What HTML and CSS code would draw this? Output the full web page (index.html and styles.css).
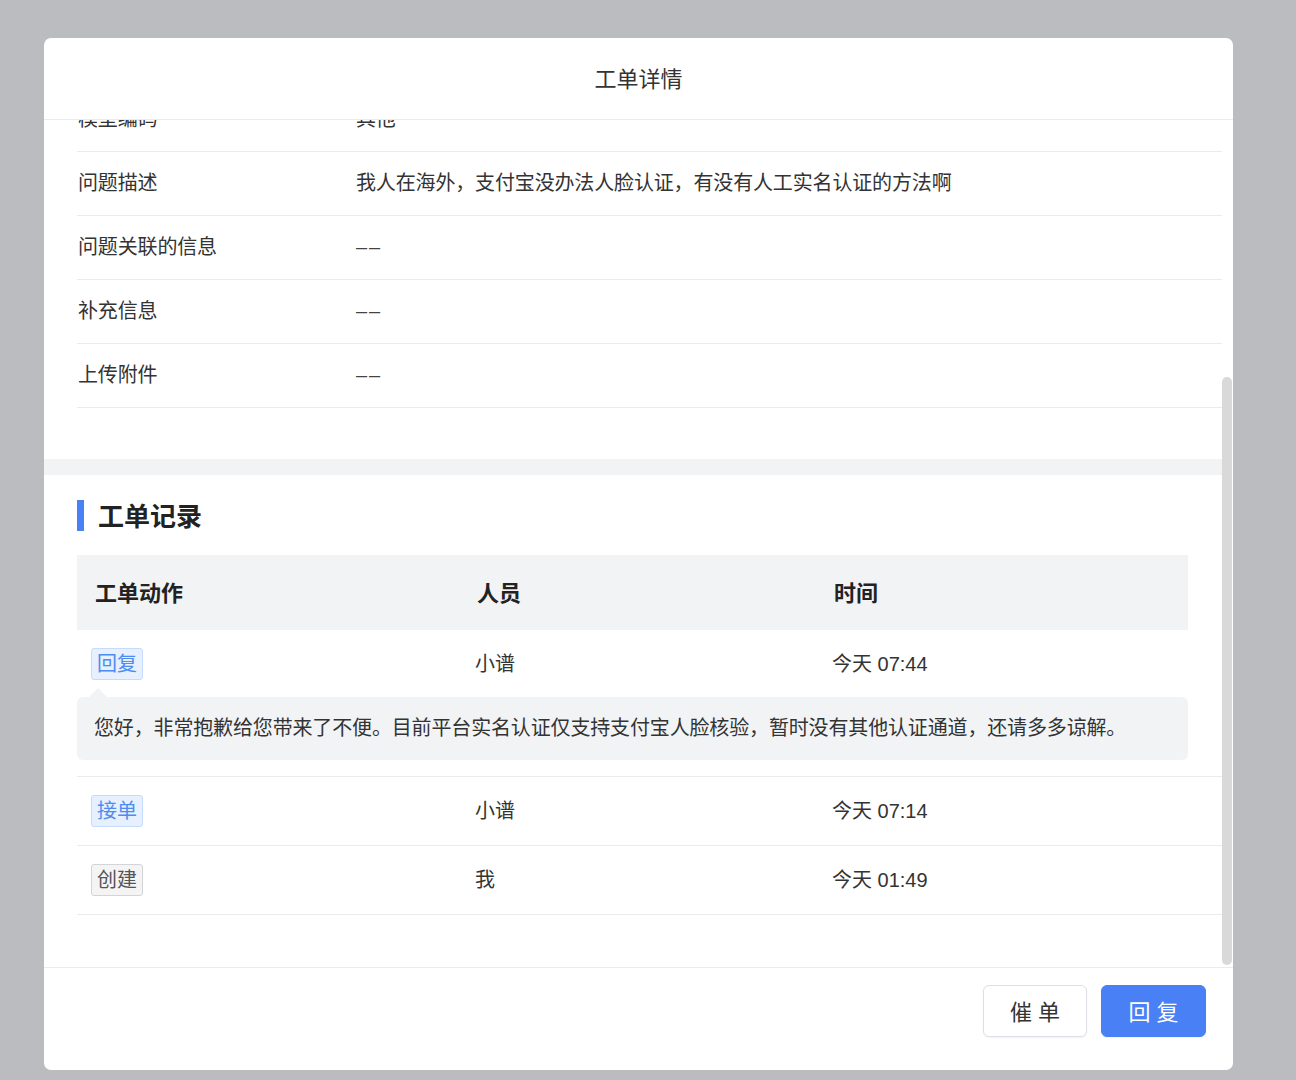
FILE: index.html
```html
<!DOCTYPE html>
<html lang="zh-CN">
<head>
    <meta charset="UTF-8">
    <meta name="viewport" content="width=device-width, initial-scale=1.0">
    <title>工单详情</title>
    <link rel="stylesheet" href="styles.css">
</head>
<body>

<div class="mask">
    <div class="dialog">
        <div class="dialog-header">工单详情</div>

        <div class="dialog-main">
            <div class="dialog-body" id="dialogBody">
                <section class="panel">
                    <h3 class="panel-title">基本信息</h3>
                    <div class="info-row"><span class="info-label">工单编号</span><span class="info-value">GD202406120318</span></div>
                    <div class="info-row"><span class="info-label">工单状态</span><span class="info-value">处理中</span></div>
                    <div class="info-row"><span class="info-label">问题分类</span><span class="info-value">实名认证</span></div>
                    <div class="info-row"><span class="info-label">提交时间</span><span class="info-value">今天 01:49</span></div>
                    <div class="info-row"><span class="info-label">模型编码</span><span class="info-value">其他</span></div>
                    <div class="info-row"><span class="info-label">问题描述</span><span class="info-value">我人在海外，支付宝没办法人脸认证，有没有人工实名认证的方法啊</span></div>
                    <div class="info-row"><span class="info-label">问题关联的信息</span><span class="info-value empty">––</span></div>
                    <div class="info-row"><span class="info-label">补充信息</span><span class="info-value empty">––</span></div>
                    <div class="info-row"><span class="info-label">上传附件</span><span class="info-value empty">––</span></div>
                </section>

                <section class="panel">
                    <h3 class="panel-title">工单记录</h3>
                    <div class="record-head">
                        <div>工单动作</div>
                        <div>人员</div>
                        <div>时间</div>
                    </div>

                    <div class="record-row has-reply">
                        <div class="record-cols">
                            <div><span class="tag tag-blue">回复</span></div>
                            <div>小谱</div>
                            <div>今天 07:44</div>
                        </div>
                        <div class="reply-bubble">您好，非常抱歉给您带来了不便。目前平台实名认证仅支持支付宝人脸核验，暂时没有其他认证通道，还请多多谅解。</div>
                    </div>

                    <div class="record-row">
                        <div class="record-cols">
                            <div><span class="tag tag-blue">接单</span></div>
                            <div>小谱</div>
                            <div>今天 07:14</div>
                        </div>
                    </div>

                    <div class="record-row">
                        <div class="record-cols">
                            <div><span class="tag tag-gray">创建</span></div>
                            <div>我</div>
                            <div>今天 01:49</div>
                        </div>
                    </div>
                </section>
            </div>

            <div class="scroll-track">
                <div class="scroll-thumb"></div>
            </div>
        </div>

        <div class="dialog-footer">
            <button class="btn">催 单</button>
            <button class="btn btn-primary">回 复</button>
        </div>
    </div>
</div>

<script>
    // keep the record list in view
    const dialogBody = document.getElementById('dialogBody');
    dialogBody.scrollTop = dialogBody.scrollHeight;
</script>

</body>
</html>
```

FILE: styles.css
```css
body {
    margin: 0;
    background-color: #bbbcc0;
    font-family: "Liberation Sans", "Noto Sans CJK SC", sans-serif;
    color: #333;
}
.mask {
    padding: 38px 0 0 44px;
}
.dialog {
    width: 1189px;
    height: 1032px;
    background-color: #fff;
    border-radius: 7px;
    overflow: hidden;
    display: flex;
    flex-direction: column;
}
.dialog-header {
    height: 78px;
    padding-bottom: 3px;
    flex-shrink: 0;
    border-bottom: 1px solid #ebebeb;
    display: flex;
    align-items: center;
    justify-content: center;
    font-size: 22px;
    color: #333;
}
.dialog-main {
    flex: 1;
    min-height: 0;
    display: flex;
}
.dialog-body {
    flex: 1;
    overflow: hidden;
}
.scroll-track {
    width: 11px;
    flex-shrink: 0;
}
.scroll-thumb {
    width: 10px;
    height: 588px;
    margin-top: 257px;
    border-radius: 5px;
    background-color: #d9d9d9;
}
.panel {
    padding: 25px 0 51px 33px;
}
.panel + .panel {
    border-top: 16px solid #f2f3f5;
    padding-bottom: 52px;
}
.panel-title {
    margin: 0 0 24px;
    height: 28px;
    padding-bottom: 3px;
    display: flex;
    align-items: center;
    font-size: 26px;
    font-weight: bold;
    color: #222;
}
.panel-title::before {
    content: "";
    width: 7px;
    height: 31px;
    margin-right: 14px;
    margin-top: 3px;
    background-color: #4a80f5;
}
.info-row {
    display: flex;
    padding: 20px 0;
    line-height: 23px;
    font-size: 20px;
    letter-spacing: -0.15px;
    border-bottom: 1px solid #ebebeb;
}
.info-label {
    width: 278px;
    flex-shrink: 0;
    padding-left: 1px;
}
.info-value.empty {
    letter-spacing: 2px;
    color: #444;
}
.record-head,
.record-cols {
    display: grid;
    grid-template-columns: 382px 357px 1fr;
    align-items: center;
}
.record-head {
    height: 72px;
    padding-bottom: 3px;
    margin-right: 34px;
    background-color: #f2f3f5;
    font-size: 22px;
    font-weight: bold;
    color: #222;
}
.record-head > div {
    padding-left: 18px;
}
.record-row {
    border-bottom: 1px solid #ebebeb;
}
.record-cols {
    padding: 18px 0;
    font-size: 20px;
    line-height: 30px;
}
.record-cols > div {
    padding-left: 16px;
}
.record-cols > div:first-child {
    padding-left: 14px;
}
.has-reply .record-cols {
    padding-bottom: 17px;
}
.tag {
    display: inline-block;
    height: 30px;
    line-height: 30px;
    padding: 0 5px;
    border-radius: 3px;
    font-size: 20px;
    vertical-align: top;
}
.tag-blue {
    background-color: #e6f0fe;
    border: 1px solid #c6dbfc;
    color: #4d8cf0;
}
.tag-gray {
    background-color: #f4f4f5;
    border: 1px solid #d3d4d6;
    color: #555;
}
.reply-bubble {
    position: relative;
    margin: 0 34px 16px 0;
    padding: 20px 17px;
    line-height: 23px;
    font-size: 20px;
    letter-spacing: -0.15px;
    background-color: #f2f3f5;
    border-radius: 6px;
}
.reply-bubble::before {
    content: "";
    position: absolute;
    left: 12px;
    top: -9px;
    border-left: 9px solid transparent;
    border-right: 9px solid transparent;
    border-bottom: 9px solid #f2f3f5;
}
.dialog-footer {
    flex-shrink: 0;
    border-top: 1px solid #ebebeb;
    padding: 17px 27px 33px;
    display: flex;
    justify-content: flex-end;
    gap: 14px;
}
.btn {
    width: 104px;
    height: 52px;
    padding: 0 0 3px;
    border: 1px solid #dcdfe6;
    border-radius: 6px;
    background-color: #fff;
    color: #333;
    font-family: inherit;
    font-size: 22px;
    cursor: pointer;
    box-shadow: 0 1px 2px rgba(0, 0, 0, 0.05);
}
.btn-primary {
    width: 105px;
    background-color: #4a80f5;
    border-color: #4a80f5;
    color: #fff;
}
```
